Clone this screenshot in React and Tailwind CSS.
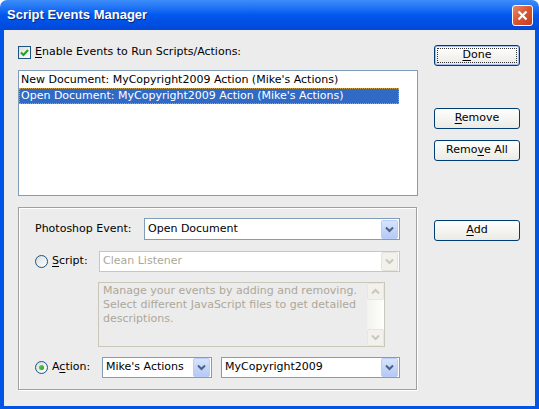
import React from 'react';

const font = { fontFamily: '"DejaVu Sans", Verdana, sans-serif' };

const Chevron = ({ color = '#4d6185' }) => (
  <svg width="9" height="7" viewBox="0 0 9 7">
    <path d="M1 1.5 L4.5 5 L8 1.5" fill="none" stroke={color} strokeWidth="2" />
  </svg>
);

const ChevronUp = ({ color = '#c9c7ba' }) => (
  <svg width="9" height="7" viewBox="0 0 9 7">
    <path d="M1 5.5 L4.5 2 L8 5.5" fill="none" stroke={color} strokeWidth="2" />
  </svg>
);

const Dropdown = ({ value, width, disabled }) => (
  <div
    className={`flex items-center h-[21px] border bg-white ${disabled ? 'border-[#c9c7ba] text-[#aca899]' : 'border-[#7f9db9] text-black'} ${width}`}
  >
    <span className="flex-1 pl-[3px] truncate">{value}</span>
    <div
      className={`w-[17px] h-[19px] mr-px flex items-center justify-center rounded-[2px] border ${disabled ? 'bg-[#f2f1ec] border-[#e5e3dc]' : 'bg-gradient-to-b from-[#d8e4fd] to-[#b4c9f7] border-[#bccef7]'}`}
    >
      <Chevron color={disabled ? '#c9c7ba' : '#4d6185'} />
    </div>
  </div>
);

const Button = ({ children, primary }) => (
  <button
    className={`w-[86px] h-[21px] rounded-[3px] border border-[#003c74] bg-gradient-to-b from-white to-[#ebeae4] text-black text-[11px] flex items-center justify-center ${primary ? 'shadow-[inset_0_0_0_1px_#a9c0ef]' : ''}`}
    style={font}
  >
    {primary ? (
      <span className="w-[80px] h-[15px] flex items-center justify-center border border-dotted border-[#333]">{children}</span>
    ) : (
      <span>{children}</span>
    )}
  </button>
);

const Radio = ({ checked }) => (
  <div className="w-[13px] h-[13px] rounded-full border border-[#1c5180] bg-gradient-to-br from-[#dcdcd7] to-white flex items-center justify-center">
    {checked && <div className="w-[5px] h-[5px] rounded-full bg-gradient-to-br from-[#55d551] to-[#21a121]" />}
  </div>
);

const U = ({ children }) => <span className="underline underline-offset-2">{children}</span>;

export default function App() {
  return (
    <div className="w-[539px] h-[409px] flex flex-col text-[11px] text-black select-none" style={font}>
      {/* title bar */}
      <div className="h-[30px] shrink-0 rounded-t-[7px] bg-gradient-to-b from-[#3d8dfa] via-[#0058ee] to-[#0148d8] flex items-center pl-[7px] pr-[6px]">
        <span
          className="flex-1 text-white font-bold text-[13px] [text-shadow:1px_1px_0_#0a2a80]"
          style={{ fontFamily: '"Liberation Sans", Arial, sans-serif' }}
        >
          Script Events Manager
        </span>
        <div className="w-[21px] h-[21px] rounded-[3px] border border-white bg-gradient-to-br from-[#e9876a] via-[#d9532e] to-[#c4401d] flex items-center justify-center">
          <svg width="11" height="11" viewBox="0 0 11 11">
            <path d="M1.5 1.5 L9.5 9.5 M9.5 1.5 L1.5 9.5" stroke="white" strokeWidth="2.2" />
          </svg>
        </div>
      </div>

      {/* window frame + client */}
      <div className="flex-1 flex bg-[#0055e5] px-[4px] pb-[3px]">
        <div className="flex-1 bg-[#ececec] flex pl-[14px] pt-[16px]">
          {/* left column */}
          <div className="w-[400px] flex flex-col">
            <div className="flex items-center h-[13px]">
              <div className="w-[13px] h-[13px] border border-[#1c5180] bg-gradient-to-br from-[#dcdcd7] to-white flex items-center justify-center">
                <svg width="9" height="8" viewBox="0 0 9 8">
                  <path d="M1 3.5 L3.5 6 L8 1" fill="none" stroke="#21a121" strokeWidth="2" />
                </svg>
              </div>
              <span className="ml-[4px]"><U>E</U>nable Events to Run Scripts/Actions:</span>
            </div>

            {/* event list */}
            <div className="mt-[11px] h-[126px] border border-[#7f9db9] bg-white pt-px">
              <div className="h-[16px] pl-[2px] leading-[16px] w-[380px]">New Document: MyCopyright2009 Action (Mike's Actions)</div>
              <div className="h-[16px] pl-[2px] leading-[15px] w-[380px] bg-[#316ac5] text-white outline-1 outline-dotted outline-[#ce9e42] -outline-offset-1">
                Open Document: MyCopyright2009 Action (Mike's Actions)
              </div>
            </div>

            {/* event details group */}
            <div className="mt-[11px] h-[183px] w-[399px] border border-[#a0a0a0] shadow-[inset_1px_1px_0_white,1px_1px_0_white] pl-[16px] pt-[10px] flex flex-col">
              <div className="flex items-center h-[22px]">
                <span className="w-[109px]">Photoshop Event:</span>
                <Dropdown value="Open Document" width="w-[256px] h-[22px]" />
              </div>

              <div className="flex items-center h-[21px] mt-[11px]">
                <Radio />
                <span className="ml-[4px] w-[47px]"><U>S</U>cript:</span>
                <Dropdown value="Clean Listener" width="w-[301px]" disabled />
              </div>

              <div className="mt-[10px] ml-[63px] w-[287px] h-[65px] border border-[#c9c7ba] flex">
                <div className="flex-1 px-[4px] pt-px leading-[14px] text-[#aca899]">
                  Manage your events by adding and removing. Select different JavaScript files to get detailed descriptions.
                </div>
                <div className="w-[17px] flex flex-col bg-gradient-to-r from-[#f3f3ee] to-[#fefefb]">
                  <div className="h-[17px] border border-[#e8e6df] bg-[#f2f1ec] rounded-[2px] flex items-center justify-center">
                    <ChevronUp />
                  </div>
                  <div className="flex-1" />
                  <div className="h-[17px] border border-[#e8e6df] bg-[#f2f1ec] rounded-[2px] flex items-center justify-center">
                    <Chevron color="#c9c7ba" />
                  </div>
                </div>
              </div>

              <div className="flex items-center h-[21px] mt-[10px]">
                <Radio checked />
                <span className="ml-[4px] w-[50px]">A<U>c</U>tion:</span>
                <Dropdown value="Mike's Actions" width="w-[110px]" />
                <div className="w-[9px]" />
                <Dropdown value="MyCopyright2009" width="w-[179px]" />
              </div>
            </div>
          </div>

          {/* right column buttons */}
          <div className="ml-[16px] flex flex-col">
            <div className="-mt-[1px]">
              <Button primary><U>D</U>one</Button>
            </div>
            <div className="mt-[42px]">
              <Button><U>R</U>emove</Button>
            </div>
            <div className="mt-[11px]">
              <Button>Remo<U>v</U>e All</Button>
            </div>
            <div className="mt-[59px]">
              <Button><U>A</U>dd</Button>
            </div>
          </div>
        </div>
      </div>
    </div>
  );
}
